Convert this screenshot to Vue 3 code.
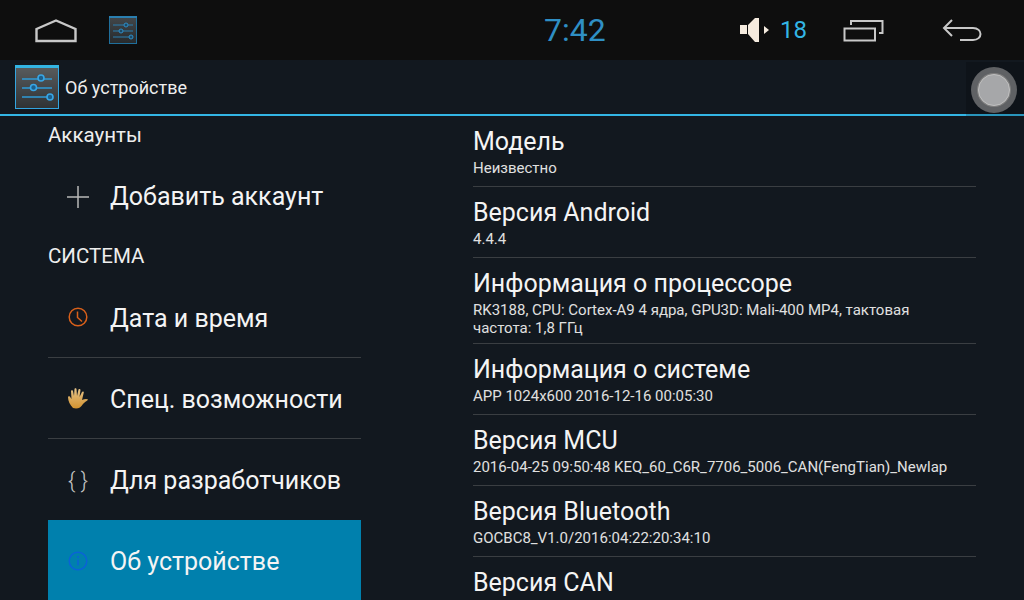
<template>
  <div class="screen">
    <div class="status-bar">
      <div class="status-left">
        <svg class="home-icon" width="44" height="26" viewBox="0 0 44 26">
          <path d="M2.5 12 L22 3.500 L41.5 12 V24 H2.5 Z" fill="none" stroke="#c8c8c8" stroke-width="2.4" />
        </svg>
        <svg class="app-small" width="30" height="30" viewBox="0 0 30 30">
          <defs>
            <linearGradient id="tile-small" x1="0" y1="0" x2="0" y2="1">
              <stop offset="0" stop-color="#43474a" />
              <stop offset="1" stop-color="#272a2c" />
            </linearGradient>
          </defs>
          <rect x="0.5" y="0.5" width="27" height="27" fill="url(#tile-small)" stroke="#1f6f9c" />
          <rect x="0" y="0" width="28" height="2" fill="#2a7fb0" />
          <path d="M4 9H24M4 15H24M4 21H24" stroke="#2a7fb0" stroke-width="1" />
          <circle cx="17" cy="9" r="2" fill="#1c4a66" stroke="#2f8cc4" />
          <circle cx="12" cy="15" r="2" fill="#1c4a66" stroke="#2f8cc4" />
          <circle cx="22" cy="21" r="2" fill="#1c4a66" stroke="#2f8cc4" />
        </svg>
      </div>
      <div class="clock">7:42</div>
      <div class="status-right">
        <div class="volume">
          <svg width="30" height="26" viewBox="0 0 30 26">
            <rect x="0" y="8" width="7" height="9" fill="#f5ebdf" />
            <path d="M8 8 L15 1 H19 V25 H15 L8 17 Z" fill="#f5ebdf" />
            <path d="M24 9 L29 13 L24 17 Z" fill="#f5ebdf" />
          </svg>
          <span>18</span>
        </div>
        <svg class="recent-icon" width="42" height="24" viewBox="0 0 42 24">
          <path d="M1.5 10.5 H32 V22.5 H1.5 Z M8 7 V3 H39.5 V15 H36" fill="none" stroke="#c8c8c8" stroke-width="2" />
        </svg>
        <svg class="back-icon" width="40" height="24" viewBox="0 0 40 24">
          <path d="M10 2 L2 10 L10 18 M2 10 H31 C41 10 41 22 31 22 H18" fill="none" stroke="#c8c8c8" stroke-width="2" />
        </svg>
      </div>
    </div>

    <div class="action-bar">
      <svg class="app-icon" width="44" height="44" viewBox="0 0 44 44">
        <defs>
          <linearGradient id="tile" x1="0" y1="0" x2="0" y2="1">
            <stop offset="0" stop-color="#5a5d5f" />
            <stop offset="1" stop-color="#2f3234" />
          </linearGradient>
        </defs>
        <rect x="0.5" y="0.5" width="43" height="43" fill="url(#tile)" stroke="#33a5e0" />
        <rect x="0" y="0" width="44" height="3" fill="#33b5e5" />
        <path d="M7 14H37M7 23H37M7 32H37" stroke="#2f9bd6" stroke-width="1.4" />
        <circle cx="26" cy="13" r="3" fill="#1d5f8a" stroke="#38a6e6" stroke-width="1.6" />
        <circle cx="18.500" cy="22.500" r="3" fill="#1d5f8a" stroke="#38a6e6" stroke-width="1.600" />
        <circle cx="35" cy="32" r="3" fill="#1d5f8a" stroke="#38a6e6" stroke-width="1.600" />
      </svg>
      <span class="action-title">Об устройстве</span>
    </div>

    <div class="float-shade"></div>
    <div class="float-button"><div class="float-inner"></div></div>

    <div class="content">
      <div class="left-pane">
        <div class="section-head">Аккаунты</div>
        <div class="menu-row short">
          <svg class="menu-icon" width="22" height="22" viewBox="0 0 22 22">
            <path d="M11 0V22M0 11H22" stroke="#b8b8b8" stroke-width="1.5" />
          </svg>
          <span>Добавить аккаунт</span>
        </div>
        <div class="section-head second">СИСТЕМА</div>
        <div class="menu-row line">
          <svg class="menu-icon" width="22" height="22" viewBox="0 0 22 22">
            <circle cx="11" cy="11" r="8.800" fill="none" stroke="#d9601a" stroke-width="1.500" />
            <path d="M10.500 5.500V11.500L15 15.500" fill="none" stroke="#d9601a" stroke-width="1.500" />
          </svg>
          <span>Дата и время</span>
        </div>
        <div class="menu-row line">
          <svg class="menu-icon" width="22" height="22" viewBox="0 0 22 22">
            <defs>
              <linearGradient id="hand" x1="0" y1="0" x2="0" y2="1">
                <stop offset="0" stop-color="#e6c48a" />
                <stop offset="1" stop-color="#d2922f" />
              </linearGradient>
            </defs>
            <path d="M6 21 C3 18 1 14 1 10 C1 9 3 9 3.500 10.500 L4.500 12 L4 4 C4 3 6 3 6 4 L7 9 L7.500 2 C7.500 1 9.500 1 9.500 2 L10 9 L11.500 2.500 C11.500 1.500 13.500 2 13.500 3 L12.500 10 L15 5 C15.500 4 17 4.500 16.800 5.500 L15 13 C17 12 20 11.500 21 12.500 C21 13.500 18 14.500 16 17 C14 20 12 21.500 9 21.500 Z" fill="url(#hand)" />
          </svg>
          <span>Спец. возможности</span>
        </div>
        <div class="menu-row">
          <span class="menu-icon braces">{ }</span>
          <span>Для разработчиков</span>
        </div>
        <div class="menu-row active">
          <svg class="menu-icon" width="22" height="22" viewBox="0 0 22 22">
            <circle cx="11" cy="11" r="8.800" fill="none" stroke="#0a62d8" stroke-width="1.500" />
            <path d="M11 9.500V15.500" stroke="#0a62d8" stroke-width="1.500" />
            <circle cx="11" cy="7" r="1" fill="#0a62d8" />
          </svg>
          <span>Об устройстве</span>
        </div>
      </div>

      <div class="right-pane">
        <div v-for="item in infoItems" :key="item.title" class="info-row">
          <div class="info-title">{{ item.title }}</div>
          <div v-if="item.text" class="info-text">{{ item.text }}</div>
        </div>
      </div>
    </div>
  </div>
</template>

<script setup>
const infoItems = [
  { title: 'Модель', text: 'Неизвестно' },
  { title: 'Версия Android', text: '4.4.4' },
  { title: 'Информация о процессоре', text: 'RK3188, CPU: Cortex-A9 4 ядра, GPU3D: Mali-400 MP4, тактовая частота: 1,8 ГГц' },
  { title: 'Информация о системе', text: 'APP 1024x600 2016-12-16 00:05:30' },
  { title: 'Версия MCU', text: '2016-04-25 09:50:48 KEQ_60_C6R_7706_5006_CAN(FengTian)_Newlap' },
  { title: 'Версия Bluetooth', text: 'GOCBC8_V1.0/2016:04:22:20:34:10' },
  { title: 'Версия CAN', text: '' }
]
</script>

<style>
html, body {
  margin: 0;
  background: #12181f;
  overflow: hidden;
}
</style>

<style scoped>
.screen {
  position: relative;
  width: 1024px;
  height: 600px;
  overflow: hidden;
  background: #12181f;
  color: #fff;
  font-family: Roboto, "Noto Sans", sans-serif;
}

.status-bar {
  display: flex;
  align-items: center;
  justify-content: space-between;
  height: 60px;
  background: #0e0e0e;
  box-sizing: border-box;
}

.status-left {
  display: flex;
  align-items: center;
  width: 480px;
  padding-left: 34px;
  box-sizing: border-box;
}

.app-small {
  margin-left: 31px;
  margin-top: 2px;
}

.clock {
  font-size: 32px;
  color: #2f8fc4;
  width: 120px;
  margin-left: 64px;
}

.status-right {
  flex: 1;
  display: flex;
  align-items: center;
}

.volume {
  display: flex;
  align-items: center;
  color: #33b5e5;
  font-size: 24px;
  margin-left: 76px;
  gap: 10px;
}

.recent-icon {
  margin-left: 36px;
}

.back-icon {
  margin-left: 57px;
}

.action-bar {
  display: flex;
  align-items: center;
  height: 54px;
  border-bottom: 2px solid #33b5e5;
  padding-left: 15px;
  background: #12181f;
}

.app-icon {
  margin-right: 6px;
}

.action-title {
  font-size: 18px;
  color: #eee;
}

.float-shade {
  position: absolute;
  left: 966px;
  top: 62px;
  width: 58px;
  height: 54px;
  background: rgba(0, 0, 0, 0.18);
}

.float-button {
  position: absolute;
  right: 7px;
  top: 67px;
  width: 46px;
  height: 46px;
  border-radius: 50%;
  background: #5f6164;
  display: flex;
  align-items: center;
  justify-content: center;
}

.float-inner {
  width: 30px;
  height: 30px;
  border-radius: 50%;
  background: #a6a7a9;
  border: 1px solid #c0c0c0;
  box-shadow: 0 0 0 1px #808080;
}

.content {
  display: flex;
}

.left-pane {
  width: 313px;
  margin-left: 48px;
}

.section-head {
  display: flex;
  align-items: center;
  box-sizing: border-box;
  height: 40px;
  padding-bottom: 2px;
  font-size: 20.5px;
  color: #eee;
}

.section-head.second {
  height: 41px;
  padding-bottom: 1px;
}

.menu-row {
  display: flex;
  align-items: center;
  height: 81px;
  font-size: 25px;
  color: #f4f4f4;
  box-sizing: border-box;
  padding-top: 1px;
}

.menu-row.short {
  height: 80px;
}

.menu-row.line {
  border-bottom: 1px solid #3a3e42;
  padding-top: 2px;
}

.menu-row.line .menu-icon {
  margin-top: -2px;
}

.menu-row.active {
  background: #0080ad;
}

.menu-icon {
  flex: none;
  margin-left: 19px;
  margin-right: 21px;
  width: 22px;
}

.braces {
  font-size: 22px;
  font-weight: 300;
  color: #c4c4c4;
  white-space: nowrap;
  text-align: center;
}

.right-pane {
  width: 503px;
  margin-left: 112px;
}

.info-row {
  box-sizing: border-box;
  min-height: 71px;
  border-bottom: 1px solid #3a3e42;
  padding: 9px 0 6px;
}

.info-title {
  font-size: 25px;
  line-height: 34px;
  color: #f4f4f4;
}

.info-text {
  font-size: 15px;
  line-height: 18px;
  color: #e0e0e0;
  padding-right: 23px;
}
</style>
